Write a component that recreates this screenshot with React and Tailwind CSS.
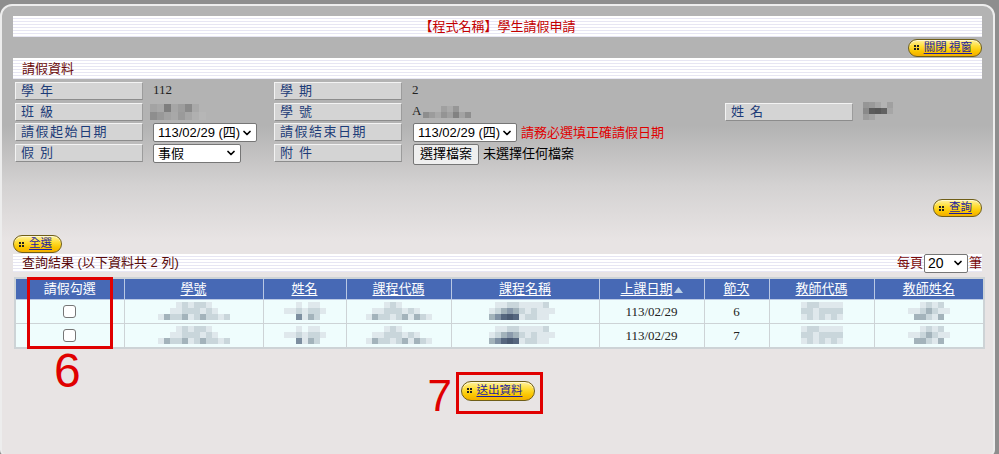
import React from "react";
import { ChevronDown } from "lucide-react";

const CJK = "font-['Liberation_Sans','Noto_Sans_CJK_TC',sans-serif]";
const SERIF = "font-['Liberation_Serif','Noto_Sans_CJK_TC',serif]";

// pixelated blur blocks (hidden personal data)
const Mosaic = ({ rows, px = 6, h = 6 }) => (
  <div className="inline-flex flex-col align-middle">
    {rows.map((r, i) => (
      <div key={i} className="flex">
        {r.map((c, j) => (
          <span key={j} className="block" style={{ width: px, height: h, backgroundColor: c || "transparent" }} />
        ))}
      </div>
    ))}
  </div>
);

const L = "#dfe8ec";
const M = "#c9d6db";
const D = "#a3b3bb";
const X = "#7d8fa0";
const N = null;

const MOSAIC_ID = [
  [N, N, N, L, M, L, M, M, L, N, N, N],
  [N, N, L, L, M, M, M, L, M, L, N, N],
  [L, D, M, M, D, L, M, D, M, M, L, M],
];
const MOSAIC_NAME = [
  [N, N, L, N, L, L, N],
  [L, L, M, L, M, M, L],
  [N, N, X, L, D, M, N],
];
const MOSAIC_CODE = [
  [N, N, N, L, M, L, N, N, N, N, N],
  [N, L, L, M, M, M, L, M, L, N, N],
  [L, D, M, M, L, M, D, L, D, M, L],
];
const MOSAIC_COURSE = [
  [N, L, L, M, M, L, L, L, L, M, N, N],
  [L, M, D, "#8a9aab", D, M, L, M, L, L, L, N],
  [D, "#7f90a3", "#56677f", "#4a5a72", "#56677f", L, M, M, L, L, N, N],
];
const MOSAIC_TCODE = [
  [L, M, M, L, L, L, L],
  [M, M, L, M, M, M, M],
  [L, M, L, M, L, M, L],
];
const MOSAIC_TNAME = [
  [N, N, L, M, L, M, N],
  [L, L, M, D, M, L, L],
  [N, D, D, M, L, D, N],
];

const Cell = ({ children, className = "" }) => (
  <td className="p-0 border border-[#cdd3d6]">
    <div className={`h-[23px] flex items-center justify-center leading-none ${className}`}>{children}</div>
  </td>
);

const DataRow = ({ period }) => (
  <tr className="bg-[#effdfd]">
    <Cell>
      <span className="block w-[13px] h-[13px] rounded-[3px] border border-[#767676] bg-white" />
    </Cell>
    <Cell><Mosaic rows={MOSAIC_ID} /></Cell>
    <Cell><Mosaic rows={MOSAIC_NAME} /></Cell>
    <Cell><Mosaic rows={MOSAIC_CODE} /></Cell>
    <Cell><Mosaic rows={MOSAIC_COURSE} /></Cell>
    <Cell className={`text-[13px] text-[#222] ${SERIF}`}>113/02/29</Cell>
    <Cell className={`text-[13px] text-[#222] ${SERIF}`}>{period}</Cell>
    <Cell><Mosaic rows={MOSAIC_TCODE} /></Cell>
    <Cell><Mosaic rows={MOSAIC_TNAME} /></Cell>
  </tr>
);

function PillButton({ label, tall }) {
  return (
    <span
      className={`inline-flex items-center ${tall ? "h-[20px] pr-[11px]" : "h-[18px] pr-[9px]"} pl-[5px] rounded-full border border-[#6f5e18] bg-[linear-gradient(to_bottom,#fff2a0_0%,#ffdd33_40%,#fbc600_72%,#f2ad00_100%)] shadow-[inset_0_1px_0_#fff8d0]`}
    >
      <span className="grid grid-cols-2 gap-[1px] mr-[5px]">
        <span className="w-[2px] h-[2px] bg-[#222]" />
        <span className="w-[2px] h-[2px] bg-[#222]" />
        <span className="w-[2px] h-[2px] bg-[#222]" />
        <span className="w-[2px] h-[2px] bg-[#222]" />
      </span>
      <span className={`text-[11.5px] leading-none whitespace-nowrap text-[#1c1c9e] underline underline-offset-2 ${CJK}`}>{label}</span>
    </span>
  );
}

function FieldLabel({ children, wide }) {
  return (
    <div
      className={`h-[18px] w-[128px] shrink-0 flex items-center pl-[5px] bg-[#d4d4d4] border-t border-l border-[#f3f3f3] border-b border-r border-b-[#8c8c8c] border-r-[#9c9c9c] text-[13px] text-[#1d3c78] whitespace-nowrap ${CJK} ${
        wide ? "tracking-[1.5px]" : "tracking-[6px]"
      }`}
    >
      {children}
    </div>
  );
}

function FakeSelect({ text, width }) {
  return (
    <div
      className={`h-[19px] ${width} flex items-center justify-between pl-[4px] pr-[3px] bg-white border border-[#767676] rounded-[2px] text-[13px] text-black whitespace-nowrap ${CJK}`}
    >
      <span className="leading-none">{text}</span>
      <ChevronDown size={12} strokeWidth={3.5} className="text-black shrink-0" />
    </div>
  );
}

function StripeBar({ children, className = "" }) {
  return (
    <div
      className={`flex items-center bg-[repeating-linear-gradient(to_bottom,#ffffff_0px,#ffffff_2px,#e7e6f3_2px,#e7e6f3_3px)] ${className}`}
    >
      {children}
    </div>
  );
}

export default function App() {
  return (
    <div className="w-[999px] h-[454px] overflow-hidden bg-[#8e8e8e] pt-[4px]">
      <div className="relative w-[995px] h-[452px] rounded-t-[12px] rounded-b-[6px] border-2 border-[#ededed] bg-[linear-gradient(to_bottom,#b3b3b3_0px,#b3b3b3_120px,#d4d2d2_180px,#e8e4e4_235px,#e8e4e4_100%)] px-[11px] pt-[10px]">
        {/* title */}
        <StripeBar className="h-[21px] justify-center">
          <span className={`text-[13px] text-[#c40000] ${CJK}`}>【程式名稱】學生請假申請</span>
        </StripeBar>

        <div className="h-[21px] flex items-center justify-end">
          <PillButton label={"關閉\u2009視窗"} />
        </div>

        <StripeBar className="h-[21px] pl-[9px]">
          <span className={`text-[13px] text-[#6b0a0a] ${CJK}`}>請假資料</span>
        </StripeBar>

        {/* form */}
        <div className="mt-[3px] pl-[2px] flex flex-col">
          <div className="h-[20.5px] flex items-start">
            <FieldLabel>學年</FieldLabel>
            <div className={`w-[131px] pl-[10px] text-[13px] text-[#222] leading-[16px] ${SERIF}`}>112</div>
            <FieldLabel>學期</FieldLabel>
            <div className={`pl-[10px] text-[13px] text-[#222] leading-[16px] ${SERIF}`}>2</div>
          </div>
          <div className="h-[20.5px] flex items-start">
            <FieldLabel>班級</FieldLabel>
            <div className="w-[131px] pl-[7px] -mt-[4px]">
              <Mosaic
                px={7}
                h={8}
                rows={[
                  ["#a3a3a3", "#a8a8a8", "#7e7e7e", "#a6a6a6", "#9d9d9d", "#8a8a8a", "#a9a9a9", N],
                  ["#8e8e8e", "#989898", "#a2a2a2", "#a8a8a8", "#9a9a9a", "#a6a6a6", "#b0b0b0", "#b6b6b6"],
                ]}
              />
            </div>
            <FieldLabel>學號</FieldLabel>
            <div className={`w-[323px] pl-[10px] flex items-center text-[13px] text-[#222] leading-[16px] ${SERIF}`}>
              <span>A</span>
              <span className="ml-[2px]">
                <Mosaic
                  rows={[
                    [N, N, N, "#a0a0a0", "#aaaaaa", "#969696", N, N, N],
                    ["#8e8e8e", "#9c9c9c", "#a8a8a8", "#949494", "#a0a0a0", "#828282", "#a3a3a3", "#8e8e8e", N],
                  ]}
                />
              </span>
            </div>
            <FieldLabel>姓名</FieldLabel>
            <div className="pl-[10px] -mt-[5px]">
              <Mosaic
                rows={[
                  ["#969696", "#9a9a9a", "#a6a6a6", N, "#a0a0a0"],
                  ["#8a8a8a", "#5c5c5c", "#585858", "#626262", "#a6a6a6"],
                  ["#9c9c9c", "#a4a4a4", N, N, N],
                ]}
              />
            </div>
          </div>
          <div className="h-[20.5px] flex items-start">
            <FieldLabel wide>請假起始日期</FieldLabel>
            <div className="w-[131px] pl-[10px]">
              <FakeSelect text="113/02/29 (四)" width="w-[104px]" />
            </div>
            <FieldLabel wide>請假結束日期</FieldLabel>
            <div className="pl-[11px] flex items-center gap-[4px]">
              <FakeSelect text="113/02/29 (四)" width="w-[104px]" />
              <span className={`text-[13px] text-[#e00000] whitespace-nowrap ${CJK}`}>請務必選填正確請假日期</span>
            </div>
          </div>
          <div className="h-[20.5px] flex items-start">
            <FieldLabel>假別</FieldLabel>
            <div className="w-[131px] pl-[10px]">
              <FakeSelect text="事假" width="w-[88px]" />
            </div>
            <FieldLabel>附件</FieldLabel>
            <div className="pl-[11px] flex items-center gap-[4px]">
              <span className={`h-[21px] px-[6px] flex items-center bg-[#efefef] border border-[#767676] rounded-[2px] text-[13px] text-black ${CJK}`}>
                選擇檔案
              </span>
              <span className={`text-[13px] text-black ${CJK}`}>未選擇任何檔案</span>
            </div>
          </div>
        </div>

        <div className="mt-[35px] h-[18px] flex justify-end">
          <PillButton label="查詢" />
        </div>

        <div className="mt-[18px] h-[18px] flex">
          <PillButton label="全選" />
        </div>

        <StripeBar className="mt-[1px] h-[18px] pl-[9px] justify-between">
          <span className={`text-[13px] text-[#5a0a0a] ${CJK}`}>查詢結果 (以下資料共 2 列)</span>
          <div className="flex items-center gap-[1px]">
            <span className={`text-[13px] text-[#7a0a0a] ${CJK}`}>每頁</span>
            <div className={`h-[19px] w-[44px] flex items-center justify-between px-[3px] bg-white border border-[#767676] rounded-[2px] text-[14px] ${CJK}`}>
              <span className="leading-none">20</span>
              <ChevronDown size={12} strokeWidth={3.5} />
            </div>
            <span className={`text-[13px] text-[#7a0a0a] ${CJK}`}>筆</span>
          </div>
        </StripeBar>

        {/* results */}
        <div className="relative mt-[5px] ml-[1px]">
          <table className="w-[969px] border-collapse table-fixed border-2 border-[#cdd3d6]">
            <colgroup>
              <col className="w-[109px]" />
              <col className="w-[139px]" />
              <col className="w-[83px]" />
              <col className="w-[105px]" />
              <col className="w-[148px]" />
              <col className="w-[105px]" />
              <col className="w-[65px]" />
              <col className="w-[105px]" />
              <col className="w-[110px]" />
            </colgroup>
            <thead>
              <tr className={`bg-[#4769b5] text-[13px] text-white ${CJK}`}>
                <th className="p-0 h-[21px] font-normal border border-[#b9c8e4] leading-none">請假勾選</th>
                {["學號", "姓名", "課程代碼", "課程名稱"].map((h) => (
                  <th key={h} className="p-0 h-[21px] font-normal border border-[#b9c8e4] leading-none">
                    <span className="underline underline-offset-2">{h}</span>
                  </th>
                ))}
                <th className="p-0 h-[21px] font-normal border border-[#b9c8e4] leading-none">
                  <span className="underline underline-offset-2">上課日期</span>
                  <svg width="9" height="6" viewBox="0 0 9 6" className="inline-block ml-[1px] align-middle">
                    <path d="M0 6 L4.5 0 L9 6 Z" fill="#bcd2e8" />
                  </svg>
                </th>
                {["節次", "教師代碼", "教師姓名"].map((h) => (
                  <th key={h} className="p-0 h-[21px] font-normal border border-[#b9c8e4] leading-none">
                    <span className="underline underline-offset-2">{h}</span>
                  </th>
                ))}
              </tr>
            </thead>
            <tbody>
              <DataRow period="6" />
              <DataRow period="7" />
            </tbody>
          </table>

          {/* annotation 6 */}
          <div className="absolute left-[13px] top-0 w-[86px] h-[72px] border-[3px] border-[#e00000]" />
          <span className="absolute left-[40px] top-[70px] text-[48px] leading-none text-[#e00000] font-['Liberation_Sans',sans-serif]">6</span>
        </div>

        {/* submit */}
        <div className="mt-[32px] flex justify-center">
          <div className="relative flex">
            <PillButton label="送出資料" tall />
            <div className="absolute -left-[5px] -top-[9px] w-[87px] h-[42px] border-[3px] border-[#e00000]" />
            <span className="absolute -left-[33px] -top-[7px] text-[44px] leading-none text-[#e00000] font-['Liberation_Sans',sans-serif]">7</span>
          </div>
        </div>
      </div>
    </div>
  );
}
